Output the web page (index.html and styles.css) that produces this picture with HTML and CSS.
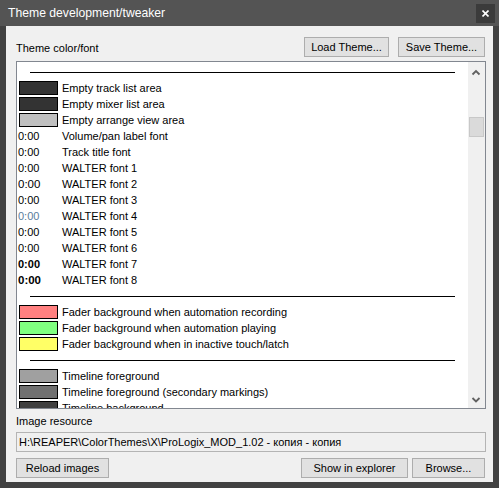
FILE: index.html
```html
<!DOCTYPE html>
<html lang="en">

<head>
    <meta charset="UTF-8">
    <title>Theme development/tweaker</title>
    <link rel="stylesheet" href="styles.css">
</head>

<body>
    <div class="window">
        <div class="titlebar">
            <span class="title">Theme development/tweaker</span>
            <button class="close">
                <svg width="7" height="7" viewBox="0 0 7 7">
                    <path d="M0.5 0.5 L6.5 6.5 M6.5 0.5 L0.5 6.5" stroke="#fff" stroke-width="1.6" />
                </svg>
            </button>
        </div>

        <div class="panel">
            <div class="head">
                <span class="caption">Theme color/font</span>
                <div class="actions">
                    <button class="btn w-load">Load Theme...</button>
                    <button class="btn w-save">Save Theme...</button>
                </div>
            </div>

            <div class="listbox">
                <div class="rows">
                    <div class="sep"></div>
                    <div class="row"><span class="swatch dark"></span><span>Empty track list area</span></div>
                    <div class="row"><span class="swatch dark"></span><span>Empty mixer list area</span></div>
                    <div class="row"><span class="swatch silver"></span><span>Empty arrange view area</span></div>
                    <div class="row"><span class="time">0:00</span><span>Volume/pan label font</span></div>
                    <div class="row"><span class="time">0:00</span><span>Track title font</span></div>
                    <div class="row"><span class="time">0:00</span><span>WALTER font 1</span></div>
                    <div class="row"><span class="time big">0:00</span><span>WALTER font 2</span></div>
                    <div class="row"><span class="time">0:00</span><span>WALTER font 3</span></div>
                    <div class="row"><span class="time blue">0:00</span><span>WALTER font 4</span></div>
                    <div class="row"><span class="time">0:00</span><span>WALTER font 5</span></div>
                    <div class="row"><span class="time">0:00</span><span>WALTER font 6</span></div>
                    <div class="row"><span class="time bold">0:00</span><span>WALTER font 7</span></div>
                    <div class="row"><span class="time bold big">0:00</span><span>WALTER font 8</span></div>
                    <div class="sep"></div>
                    <div class="row"><span class="swatch red"></span><span>Fader background when automation recording</span></div>
                    <div class="row"><span class="swatch green"></span><span>Fader background when automation playing</span></div>
                    <div class="row"><span class="swatch yellow"></span><span>Fader background when in inactive touch/latch</span></div>
                    <div class="sep"></div>
                    <div class="row"><span class="swatch grey1"></span><span>Timeline foreground</span></div>
                    <div class="row"><span class="swatch grey2"></span><span>Timeline foreground (secondary markings)</span></div>
                    <div class="row"><span class="swatch grey3"></span><span>Timeline background</span></div>
                </div>

                <div class="scrollbar">
                    <div class="arrow">
                        <svg width="17" height="17" viewBox="0 0 17 17">
                            <polyline points="4.5,12.5 8,9 11.5,12.5" fill="none" stroke="#606060" stroke-width="1.8" />
                        </svg>
                    </div>
                    <div class="track">
                        <div class="thumb"></div>
                    </div>
                    <div class="arrow">
                        <svg width="17" height="17" viewBox="0 0 17 17">
                            <polyline points="4.5,7 8,10.5 11.5,7" fill="none" stroke="#606060" stroke-width="1.8" />
                        </svg>
                    </div>
                </div>
            </div>

            <div class="caption res">Image resource</div>
            <div class="field">H:\REAPER\ColorThemes\X\ProLogix_MOD_1.02 - копия - копия</div>

            <div class="foot">
                <button class="btn w-reload">Reload images</button>
                <span class="spacer"></span>
                <button class="btn w-show">Show in explorer</button>
                <button class="btn w-browse">Browse...</button>
            </div>
        </div>
    </div>
</body>

</html>
```

FILE: styles.css
```css
:root {
    --frame: #414141;
    --bar: #545454;
    --face: #f0f0f0;
    --ff: "Liberation Sans", Arial, sans-serif;
}

* {
    box-sizing: border-box;
}

body {
    margin: 0;
    width: 499px;
    height: 488px;
    background: var(--frame);
    font-family: var(--ff);
    font-size: 11px;
    overflow: hidden;
}

.window {
    display: flex;
    flex-direction: column;
    height: 488px;
}

/* title bar */
.titlebar {
    height: 26px;
    background: var(--bar);
    display: flex;
    align-items: center;
    padding-left: 8px;
    padding-right: 4px;
}

.title {
    flex: 1;
    color: #fff;
    font-size: 12.2px;
    padding-bottom: 1px;
}

.close {
    width: 19px;
    height: 19px;
    border: none;
    padding: 0;
    background: #3b3b3b;
    display: flex;
    align-items: center;
    justify-content: center;
}

/* dialog body */
.panel {
    margin: 0 6px;
    height: 456px;
    background: var(--face);
    padding: 11px 7px 4px 10px;
    display: flex;
    flex-direction: column;
}

.head {
    display: flex;
    justify-content: space-between;
    align-items: flex-end;
    height: 20px;
}

.caption {
    line-height: 13px;
    color: #000;
}

.head .caption {
    margin-bottom: 2px;
}

.actions {
    display: flex;
    gap: 9px;
    margin-right: 1px;
}

.btn {
    height: 20px;
    padding: 0;
    background: #e1e1e1;
    border: 1px solid #adadad;
    font-family: var(--ff);
    font-size: 11px;
    color: #000;
}

.w-load { width: 85px; }
.w-save { width: 87px; }
.w-reload { width: 93px; }
.w-show { width: 107px; }
.w-browse { width: 73px; }

/* the colour/font list */
.listbox {
    margin-top: 4px;
    height: 348px;
    border: 1px solid #828790;
    background: #fff;
    display: flex;
    overflow: hidden;
}

.rows {
    flex: 1;
    padding-top: 2px;
    overflow: hidden;
}

.row {
    display: grid;
    grid-template-columns: 45px 1fr;
    align-items: center;
    height: 16px;
    line-height: 16px;
    color: #000;
    white-space: nowrap;
}

.sep {
    height: 16px;
    padding-top: 8px;
}

.sep::before {
    content: '';
    display: block;
    border-top: 1px solid #000;
    margin: 0 13px;
}

.swatch {
    width: 39px;
    height: 14px;
    margin-left: 2px;
    border: 1px solid #000;
}

.dark { background: #333333; }
.silver { background: #c0c0c0; }
.red { background: #ff8080; }
.green { background: #80ff80; }
.yellow { background: #ffff66; }
.grey1 { background: #a0a0a0; }
.grey2 { background: #707070; }
.grey3 { background: #404040; }

.time {
    padding-left: 1px;
}

.time.big {
    font-size: 11.5px;
}

.time.blue {
    color: #5b7d9c;
}

.time.bold {
    font-weight: bold;
}

.scrollbar {
    width: 17px;
    background: var(--face);
    display: flex;
    flex-direction: column;
}

.arrow {
    height: 17px;
}

.arrow svg {
    display: block;
}

.track {
    flex: 1;
}

.thumb {
    margin: 38px 1px 0 1px;
    height: 20px;
    background: #dadada;
    border: 1px solid #c8c8c8;
}

/* image resource */
.res {
    margin-top: 6px;
}

.field {
    margin-top: 4px;
    height: 20px;
    border: 1px solid #b4b4b4;
    background: var(--face);
    padding-left: 2px;
    line-height: 18px;
    color: #000;
    white-space: nowrap;
}

.foot {
    margin-top: 6px;
    display: flex;
    gap: 4px;
}

.spacer {
    flex: 1;
}

.foot .w-browse {
    margin-right: 1px;
}
```
